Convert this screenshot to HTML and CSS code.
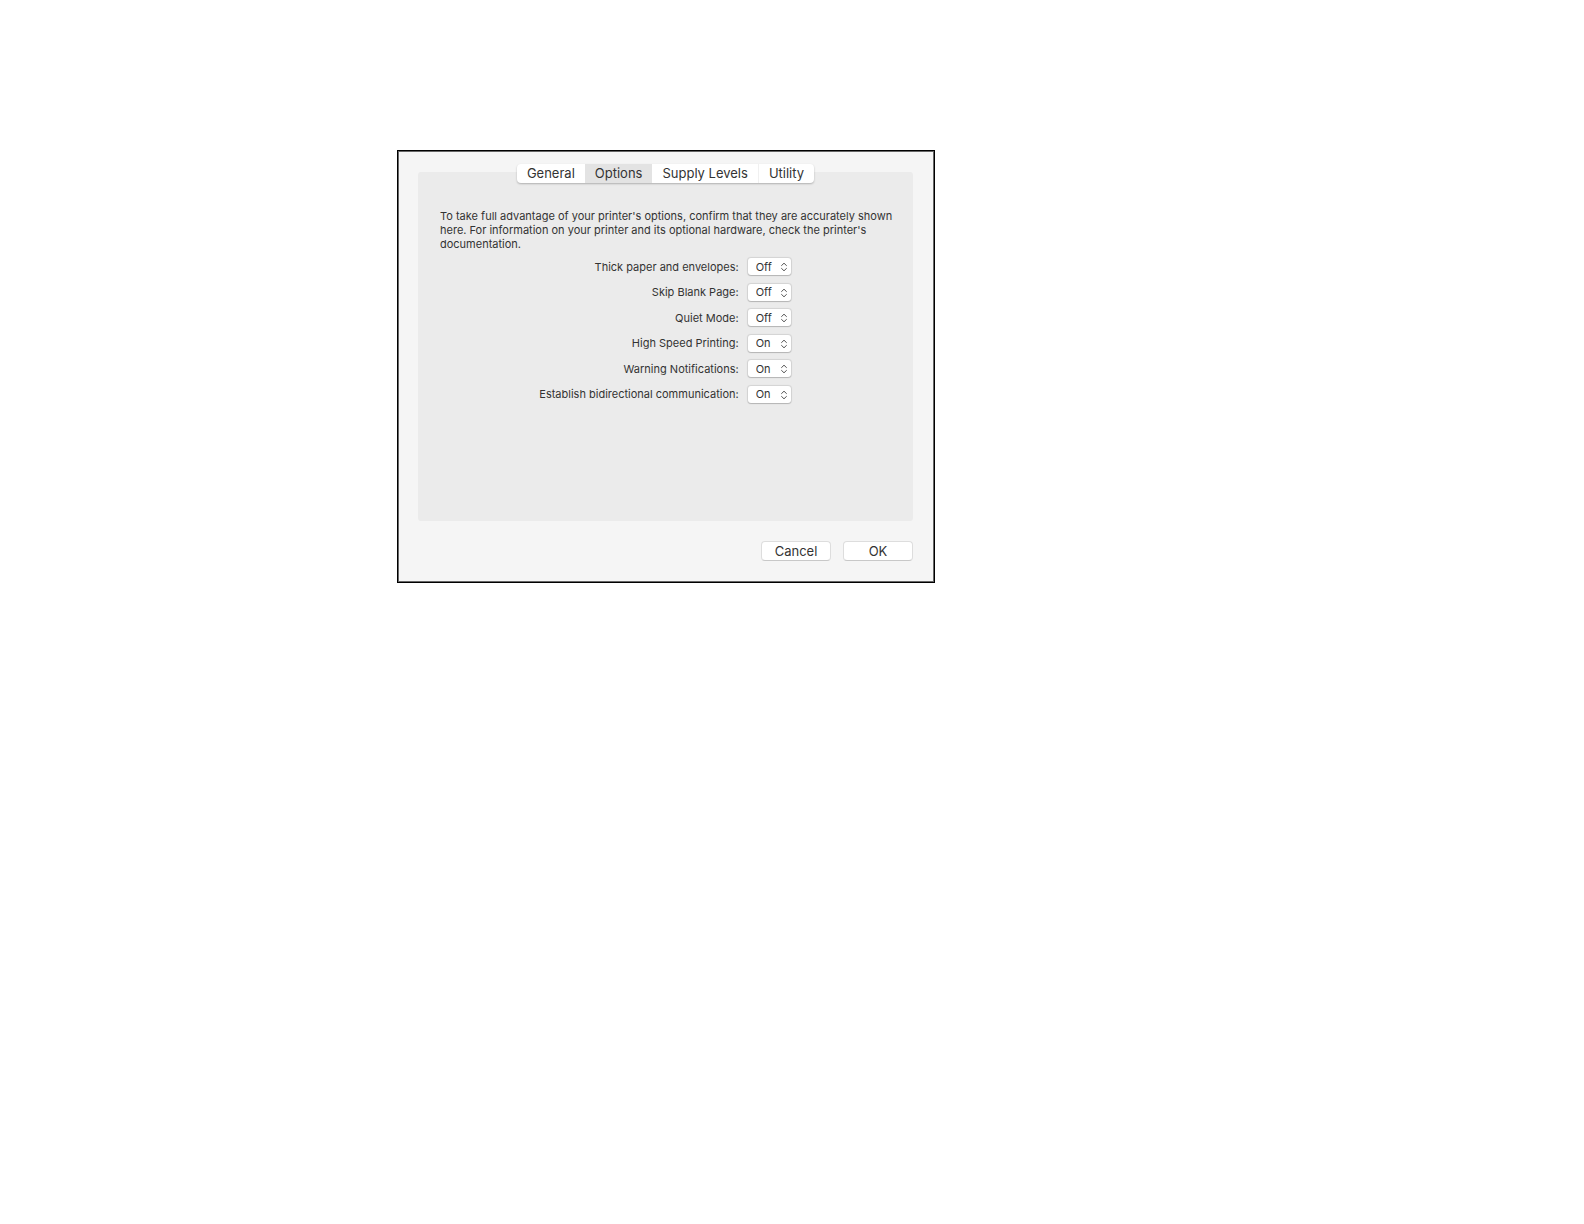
FILE: index.html
```
<!DOCTYPE html>
<html lang="en">
<head>
  <meta charset="UTF-8">
  <title>Printer Options</title>
  <link rel="stylesheet" href="styles.css">
</head>
<body>

<form class="dialog">
  <nav class="tabs">
    <button type="button" class="tab">General</button>
    <button type="button" class="tab active">Options</button>
    <button type="button" class="tab">Supply Levels</button>
    <button type="button" class="tab">Utility</button>
  </nav>

  <section class="panel">
    <p class="intro">To take full advantage of your printer's options, confirm that they are accurately shown here. For information on your printer and its optional hardware, check the printer's documentation.</p>

    <div class="options">
      <div class="row">
        <label for="thick">Thick paper and envelopes:</label>
        <div class="popup">
          <select id="thick"><option selected>Off</option><option>On</option></select>
          <svg class="arrows" viewBox="0 0 8 10"><path d="M1.5 4V3.6L4 1.2l2.5 2.4V4M1.5 6v.4L4 8.8l2.5-2.4V6"/></svg>
        </div>
      </div>
      <div class="row">
        <label for="skip">Skip Blank Page:</label>
        <div class="popup">
          <select id="skip"><option selected>Off</option><option>On</option></select>
          <svg class="arrows" viewBox="0 0 8 10"><path d="M1.5 4V3.6L4 1.2l2.5 2.4V4M1.5 6v.4L4 8.8l2.5-2.4V6"/></svg>
        </div>
      </div>
      <div class="row">
        <label for="quiet">Quiet Mode:</label>
        <div class="popup">
          <select id="quiet"><option selected>Off</option><option>On</option></select>
          <svg class="arrows" viewBox="0 0 8 10"><path d="M1.5 4V3.6L4 1.2l2.5 2.4V4M1.5 6v.4L4 8.8l2.5-2.4V6"/></svg>
        </div>
      </div>
      <div class="row">
        <label for="speed">High Speed Printing:</label>
        <div class="popup">
          <select id="speed"><option>Off</option><option selected>On</option></select>
          <svg class="arrows" viewBox="0 0 8 10"><path d="M1.5 4V3.6L4 1.2l2.5 2.4V4M1.5 6v.4L4 8.8l2.5-2.4V6"/></svg>
        </div>
      </div>
      <div class="row">
        <label for="warning">Warning Notifications:</label>
        <div class="popup">
          <select id="warning"><option>Off</option><option selected>On</option></select>
          <svg class="arrows" viewBox="0 0 8 10"><path d="M1.5 4V3.6L4 1.2l2.5 2.4V4M1.5 6v.4L4 8.8l2.5-2.4V6"/></svg>
        </div>
      </div>
      <div class="row">
        <label for="bidi">Establish bidirectional communication:</label>
        <div class="popup">
          <select id="bidi"><option>Off</option><option selected>On</option></select>
          <svg class="arrows" viewBox="0 0 8 10"><path d="M1.5 4V3.6L4 1.2l2.5 2.4V4M1.5 6v.4L4 8.8l2.5-2.4V6"/></svg>
        </div>
      </div>
    </div>
  </section>

  <div class="actions">
    <button type="button" class="button">Cancel</button>
    <button type="submit" class="button">OK</button>
  </div>
</form>

</body>
</html>
```
FILE: styles.css
```
* {
  box-sizing: border-box;
}
body {
  margin: 0;
  padding: 150px 41% 40px 397px;
  background: #fff;
  color: #333;
  font-family: Inter, "Liberation Sans", sans-serif;
  font-size: 11px;
  line-height: 14px;
}
button, select {
  font-family: inherit;
  color: inherit;
}

.dialog {
  min-width: 538px;
  padding: 13px 21px 21px 20px;
  background: #f5f5f5;
  border: 1px solid #000;
  box-shadow: inset 0 0 0 1px #666;
}

/* the tab bar overlaps the top edge of the panel */
.tabs {
  display: flex;
  width: fit-content;
  margin: 0 auto -11px;
  position: relative;
  z-index: 1;
  border-radius: 4px;
  background: #fff;
  box-shadow: 0 1px 2px rgba(0, 0, 0, 0.25);
}
.tab {
  height: 19px;
  padding: 0 10px;
  border: none;
  background: none;
  font-size: 13px;
  line-height: 19px;
}
.tab.active {
  background: #e3e3e3;
}
.tab:last-child {
  border-left: 1px solid #f0f0f0;
}

.panel {
  min-height: 349px;
  padding: 37px 16px 20px 22px;
  border-radius: 3px;
  background: #ebebeb;
}
.intro {
  margin: 0 0 7px;
}

.options {
  display: flex;
  flex-direction: column;
  justify-content: space-between;
  min-height: 145px;
}
.row {
  display: grid;
  grid-template-columns: 2fr 1fr;
  column-gap: 9px;
  align-items: center;
}
.row label {
  text-align: right;
}
.popup {
  position: relative;
  width: 43px;
  height: 17px;
}
.popup select {
  display: block;
  width: 100%;
  height: 100%;
  padding: 0 0 0 8px;
  appearance: none;
  border: none;
  border-radius: 3px;
  background: #fff;
  box-shadow: 0 0 1px 1px rgba(0, 0, 0, 0.1), 0 1px 1px rgba(0, 0, 0, 0.15);
  font-size: 11px;
}
.arrows {
  position: absolute;
  top: 4px;
  right: 3px;
  width: 8px;
  height: 10px;
  fill: none;
  stroke: #555;
  pointer-events: none;
}

.actions {
  display: flex;
  justify-content: flex-end;
  gap: 12px;
  margin-top: 20px;
}
.button {
  width: 70px;
  height: 20px;
  padding: 0;
  border: 1px solid #ddd;
  border-bottom-color: #c8c8c8;
  border-radius: 4px;
  background: #fff;
  font-size: 13px;
  line-height: 18px;
}
```
